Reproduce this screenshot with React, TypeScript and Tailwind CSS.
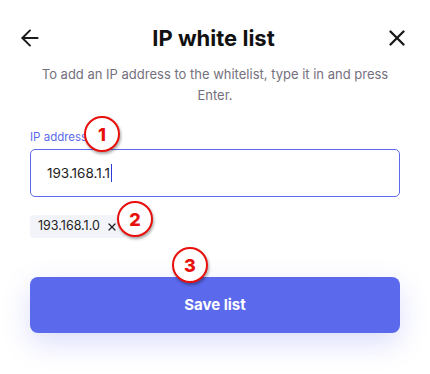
import { ArrowLeft, X } from 'lucide-react'

// Red numbered marker used as an annotation over the form
function Marker({ n, className }: { n: number; className: string }) {
  return (
    <div
      className={`absolute flex h-[36px] w-[36px] items-center justify-center rounded-full border-[2.5px] border-[#e8100c] bg-white text-[18px] font-extrabold text-[#e8100c] shadow-[1px_2px_3px_rgba(0,0,0,0.35)] ${className}`}
    >
      {n}
    </div>
  )
}

export default function App() {
  return (
    <div
      className="relative h-[374px] w-[430px] bg-white px-[30px] pt-[22px]"
      style={{ fontFamily: 'Inter, "Noto Sans", sans-serif' }}
    >
      {/* Header */}
      <div className="ml-[-13px] mr-[-10px] flex h-[32px] items-center justify-between">
        <ArrowLeft className="h-[26px] w-[26px] text-[#1a1a1a]" strokeWidth={1.8} />
        <h1 className="text-[22px] font-bold tracking-[0px] text-[#111]">IP white list</h1>
        <X className="h-[26px] w-[26px] text-[#1a1a1a]" strokeWidth={2.2} />
      </div>

      <p className="mt-[10px] px-[8px] text-center text-[13px] leading-[21px] text-[#74707e]">
        To add an IP address to the whitelist, type it in and press Enter.
      </p>

      {/* Field */}
      <div className="mt-[23px]">
        <label className="block text-[11.5px] leading-[16px] text-[#5d6aee]">IP address</label>
        <div className="mt-[4px] flex h-[48px] items-center rounded-[5px] border border-[#5d6aee] px-[16px] text-[13.5px] text-[#222]">
          193.168.1.1
          <span className="ml-px inline-block h-[18px] w-px bg-[#2b3bd8]" />
        </div>
      </div>

      {/* Chips */}
      <div className="mt-[18px] flex">
        <div className="flex h-[23px] items-center gap-[6px] rounded-[4px] bg-[#f3f4fa] px-[8px] text-[12.5px] text-[#222]">
          193.168.1.0
          <X className="h-[12px] w-[12px]" strokeWidth={2.4} />
        </div>
      </div>

      <button
        type="button"
        className="mt-[39px] flex h-[56px] w-full items-center justify-center rounded-[8px] bg-[#5b69ec] text-[15px] font-bold text-white shadow-[0_10px_28px_rgba(91,105,236,0.22)]"
      >
        Save list
      </button>

      <Marker n={1} className="left-[84px] top-[116px]" />
      <Marker n={2} className="left-[117px] top-[201px]" />
      <Marker n={3} className="left-[172px] top-[247px]" />
    </div>
  )
}
